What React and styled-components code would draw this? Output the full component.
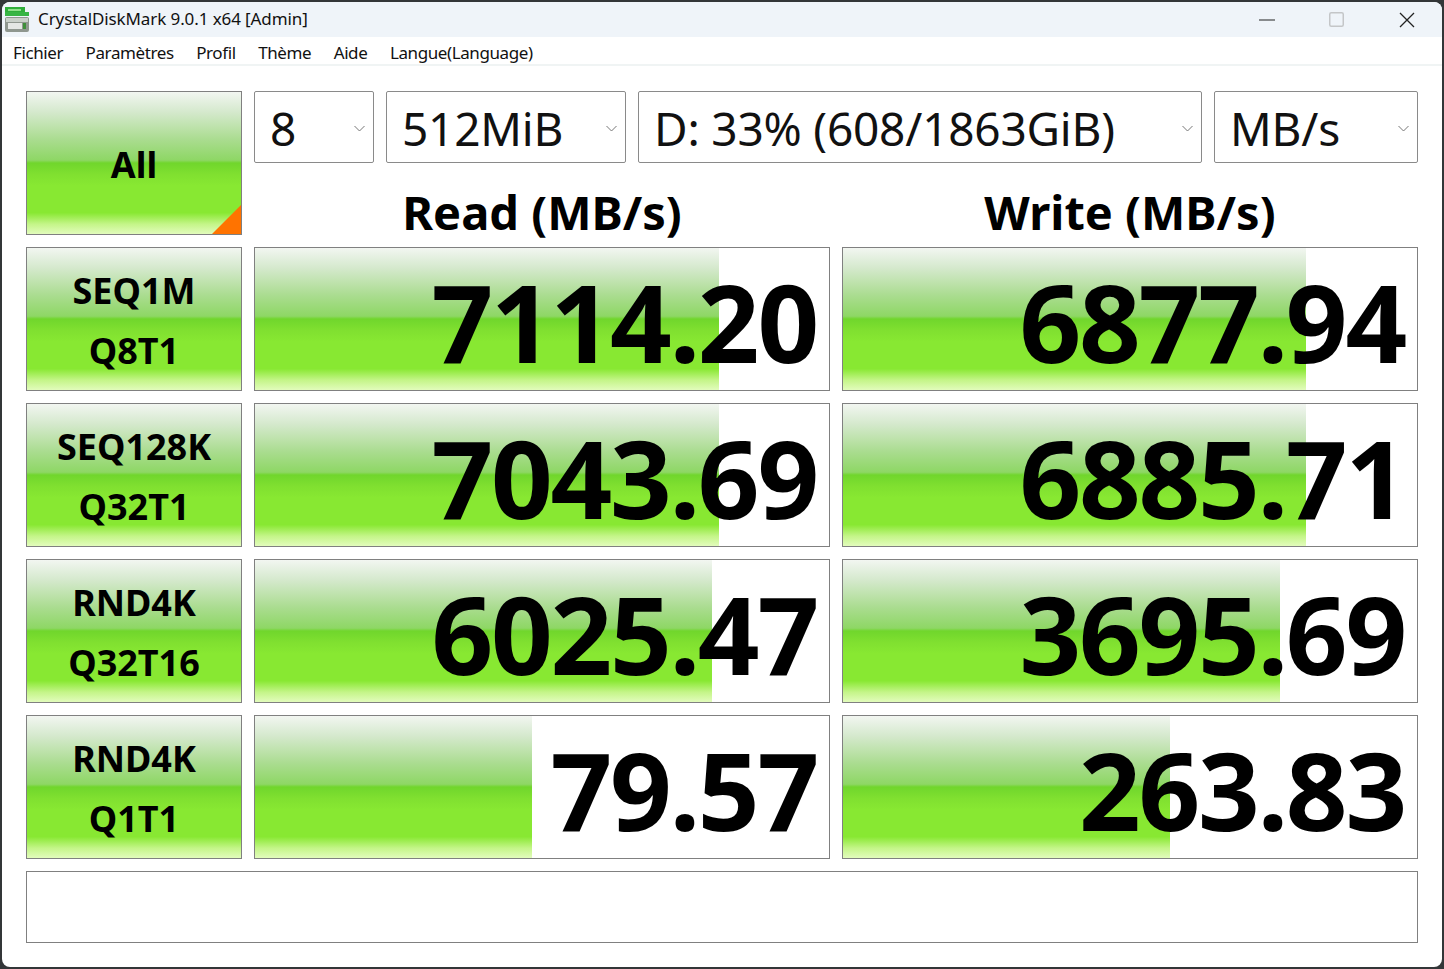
import React from 'react'
import styled, { createGlobalStyle } from 'styled-components'

const Global = createGlobalStyle`
  html, body { margin: 0; height: 100%; background: #333638; }
  body { font-family: "Noto Sans", "Open Sans", sans-serif; color: #000; }
`

const METER = `linear-gradient(180deg, #f2f6f1 0%, #d5e9cd 14%, #a9dc8e 34%, #8ed765 48%, #70d62c 50%, #80e030 58%, #88e832 66%, #88e832 85%, #c4f588 93%, #e2fcbc 100%)`

const Window = styled.div`
  margin: 2px;
  width: 1440px;
  height: 965px;
  background: #fff;
  border-radius: 8px;
  overflow: hidden;
  display: flex;
  flex-direction: column;
`

const TitleBar = styled.header`
  height: 35px;
  background: #eff4f9;
  display: flex;
  align-items: center;
  padding-left: 3px;
`

const AppIcon = styled.svg`
  width: 26px;
  height: 28px;
  align-self: flex-start;
  margin-top: 2px;
  flex: none;
`

const Title = styled.span`
  margin-left: 7px;
  margin-top: -2px;
  font-size: 17px;
  letter-spacing: -0.1px;
  color: #111;
  flex: 1;
`

const WinButton = styled.button`
  width: 70px;
  height: 35px;
  border: 0;
  padding: 0;
  background: none;
  display: flex;
  align-items: center;
  justify-content: center;
`

const MaximizeGlyph = styled.svg`
  width: 15px;
  height: 15px;
  margin-right: 2px;
`

const MenuBar = styled.nav`
  height: 29px;
  box-sizing: border-box;
  border-bottom: 2px solid #f0f4f4;
  padding: 3px 0 0 11px;
  display: flex;
  align-items: center;
  gap: 22.5px;
  font-size: 17px;
  letter-spacing: -0.4px;
  color: #111;
`

const Board = styled.main`
  display: grid;
  grid-template-columns: 216px 576px 576px;
  grid-template-rows: 72px 72px repeat(4, 156px) 84px;
  column-gap: 12px;
  padding: 25px 0 0 24px;
`

const Cell = styled.button`
  box-sizing: border-box;
  border: 1px solid #808080;
  padding: 4px 0 0;
  margin: 0;
  background: ${METER};
  color: #000;
  font-family: inherit;
  font-weight: 700;
  font-size: 36px;
  line-height: 60px;
  display: flex;
  flex-direction: column;
  align-items: center;
  justify-content: center;
  position: relative;
  height: 144px;
`

const AllCell = styled(Cell)`
  grid-row: 1 / span 2;
  overflow: hidden;
  padding-top: 4px;
  &::after {
    content: '';
    position: absolute;
    right: 0;
    bottom: 0;
    border-style: solid;
    border-width: 0 0 29px 29px;
    border-color: transparent transparent #ff7300 transparent;
  }
`

const TestCell = styled(Cell)`
  margin-top: 12px;
  grid-column: 1;
`

const Selects = styled.div`
  grid-column: 2 / span 2;
  display: grid;
  grid-template-columns: 120px 240px 564px 204px;
  column-gap: 12px;
`

const Dropdown = styled.div`
  box-sizing: border-box;
  height: 72px;
  border: 1px solid #8a8a8a;
  border-radius: 2px;
  display: flex;
  align-items: center;
  justify-content: space-between;
  padding: 2px 8px 0 15px;
  font-size: 46px;
  letter-spacing: -0.2px;
  color: #111;
`

const Chevron = styled.svg`
  width: 11px;
  height: 7px;
  flex: none;
`

const Heading = styled.h2`
  margin: 0;
  height: 72px;
  padding-top: 10px;
  box-sizing: border-box;
  text-align: center;
  font-size: 47px;
  line-height: 78px;
  font-weight: 700;
`

const Meter = styled.div`
  margin-top: 12px;
  box-sizing: border-box;
  height: 144px;
  border: 1px solid #808080;
  background: #fff;
  position: relative;
  display: flex;
  align-items: center;
  justify-content: flex-end;
  padding: 6px 12px 0 0;
`

const Fill = styled.div`
  position: absolute;
  left: 0;
  top: 0;
  bottom: 0;
  background: ${METER};
`

const Value = styled.span`
  position: relative;
  font-weight: 700;
  font-size: 108px;
  letter-spacing: -2.2px;
  line-height: 1;
`

const Comment = styled.div`
  grid-column: 1 / span 3;
  margin-top: 12px;
  box-sizing: border-box;
  height: 72px;
  width: 1392px;
  border: 1px solid #808080;
  background: #fff;
`

const menus = ['Fichier', 'Paramètres', 'Profil', 'Thème', 'Aide', 'Langue(Language)']
const selects = ['8', '512MiB', 'D: 33% (608/1863GiB)', 'MB/s']
const rows = [
  { top: 'SEQ1M', bottom: 'Q8T1', read: '7114.20', readBar: 464, write: '6877.94', writeBar: 463 },
  { top: 'SEQ128K', bottom: 'Q32T1', read: '7043.69', readBar: 464, write: '6885.71', writeBar: 463 },
  { top: 'RND4K', bottom: 'Q32T16', read: '6025.47', readBar: 457, write: '3695.69', writeBar: 437 },
  { top: 'RND4K', bottom: 'Q1T1', read: '79.57', readBar: 277, write: '263.83', writeBar: 327 },
]

function DiskIcon() {
  return (
    <AppIcon viewBox="0 0 26 28">
      <rect x="0" y="13" width="24" height="15" rx="2" fill="#8f978f" />
      <rect x="1" y="14" width="22" height="4" fill="#c9d0c9" />
      <rect x="3" y="19" width="14" height="6" fill="#e4e7e4" />
      <rect x="18" y="19" width="3" height="6" fill="#3f8f3a" />
      <rect x="0" y="3" width="20" height="5" fill="#2fae3a" />
      <rect x="0" y="8" width="24" height="4" fill="#37b544" />
      <rect x="3" y="5" width="13" height="2" fill="#8fe08a" />
    </AppIcon>
  )
}

export default function App() {
  return (
    <Window>
      <Global />
      <TitleBar>
        <DiskIcon />
        <Title>CrystalDiskMark 9.0.1 x64 [Admin]</Title>
        <WinButton aria-label="minimize">
          <svg width="16" height="2"><rect width="16" height="1" y="0.5" fill="#222" /></svg>
        </WinButton>
        <WinButton aria-label="maximize">
          <MaximizeGlyph><rect x="0.75" y="0.75" width="13.5" height="13.5" rx="1.5" fill="none" stroke="#c4c6c8" strokeWidth="1.5" /></MaximizeGlyph>
        </WinButton>
        <WinButton aria-label="close">
          <svg width="16" height="16"><path d="M1 1 L15 15 M15 1 L1 15" stroke="#222" strokeWidth="1.3" /></svg>
        </WinButton>
      </TitleBar>
      <MenuBar>
        {menus.map(m => <span key={m}>{m}</span>)}
      </MenuBar>
      <Board>
        <AllCell>All</AllCell>
        <Selects>
          {selects.map(s => (
            <Dropdown key={s}>
              {s}
              <Chevron viewBox="0 0 11 7"><path d="M0.5 1 L5.5 6 L10.5 1" fill="none" stroke="#777" /></Chevron>
            </Dropdown>
          ))}
        </Selects>
        <Heading>Read (MB/s)</Heading>
        <Heading>Write (MB/s)</Heading>
        {rows.map(r => (
          <React.Fragment key={r.top + r.bottom}>
            <TestCell><span>{r.top}</span><span>{r.bottom}</span></TestCell>
            <Meter>
              <Fill style={{ width: r.readBar }} />
              <Value>{r.read}</Value>
            </Meter>
            <Meter>
              <Fill style={{ width: r.writeBar }} />
              <Value>{r.write}</Value>
            </Meter>
          </React.Fragment>
        ))}
        <Comment />
      </Board>
    </Window>
  )
}
